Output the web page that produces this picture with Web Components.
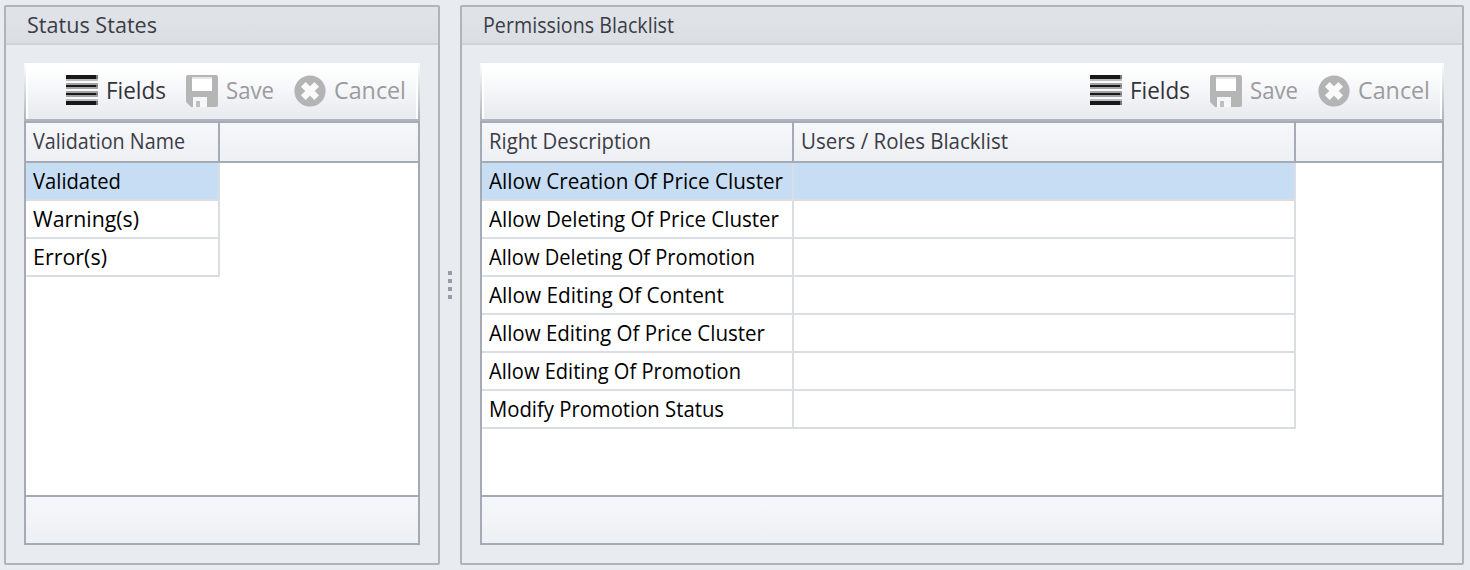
<!DOCTYPE html>
<html lang="en">
<head>
<meta charset="utf-8">
<title>Status permissions</title>
<style>
html,body{margin:0;height:100%;overflow:hidden}
body{background:#e8ebf0;font-family:"Open Sans","Noto Sans",sans-serif;color:#3c3c44}
</style>
</head>
<body>
<split-view>
  <group-panel slot="start" heading="Status States" heading-width="130">
    <tool-bar></tool-bar>
    <data-grid columns="192">
      <grid-header><grid-cell head text="Validation Name" fit="152"></grid-cell><grid-cell head></grid-cell></grid-header>
      <grid-row selected><grid-cell text="Validated" fit="88"></grid-cell></grid-row>
      <grid-row><grid-cell text="Warning(s)" fit="106"></grid-cell></grid-row>
      <grid-row><grid-cell text="Error(s)" fit="74"></grid-cell></grid-row>
    </data-grid>
  </group-panel>
  <group-panel slot="end" heading="Permissions Blacklist" heading-width="191">
    <tool-bar></tool-bar>
    <data-grid columns="310 500">
      <grid-header><grid-cell head text="Right Description" fit="162"></grid-cell><grid-cell head text="Users / Roles Blacklist" fit="207"></grid-cell><grid-cell head></grid-cell></grid-header>
      <grid-row selected><grid-cell text="Allow Creation Of Price Cluster" fit="294"></grid-cell><grid-cell></grid-cell></grid-row>
      <grid-row><grid-cell text="Allow Deleting Of Price Cluster" fit="290"></grid-cell><grid-cell></grid-cell></grid-row>
      <grid-row><grid-cell text="Allow Deleting Of Promotion" fit="266"></grid-cell><grid-cell></grid-cell></grid-row>
      <grid-row><grid-cell text="Allow Editing Of Content" fit="235"></grid-cell><grid-cell></grid-cell></grid-row>
      <grid-row><grid-cell text="Allow Editing Of Price Cluster" fit="276"></grid-cell><grid-cell></grid-cell></grid-row>
      <grid-row><grid-cell text="Allow Editing Of Promotion" fit="252"></grid-cell><grid-cell></grid-cell></grid-row>
      <grid-row><grid-cell text="Modify Promotion Status" fit="235"></grid-cell><grid-cell></grid-cell></grid-row>
    </data-grid>
  </group-panel>
</split-view>
<script>
class Base extends HTMLElement {
  constructor(){ super(); this.attachShadow({mode:'open'}); }
  connectedCallback(){ if(!this.shadowRoot.firstChild) this.shadowRoot.innerHTML = this.render(); this.ready(); }
  ready(){}
}

/* A line of text condensed to a given width. */
customElements.define('ui-label', class extends Base {
  render(){
    return `<style>:host{display:block;white-space:nowrap;width:var(--w)}
      span{display:inline-block;transform-origin:0 50%}</style><span>${this.getAttribute('text')}</span>`;
  }
  ready(){
    const want = +this.getAttribute('width'), s = this.shadowRoot.querySelector('span');
    this.style.setProperty('--w', want + 'px');
    const w = s.getBoundingClientRect().width;
    if (w) s.style.transform = `scaleX(${want / w})`;
  }
});

customElements.define('split-view', class extends Base {
  render(){
    return `<style>
      :host{display:grid;grid-template-columns:436px 20px 1004px;height:560px;padding:5px 6px 5px 4px}
      .bar{display:flex;flex-direction:column;align-items:center;justify-content:center;gap:4px}
      .bar i{width:4px;height:4px;background:#959ca8}
    </style><slot name="start"></slot><div class="bar"><i></i><i></i><i></i><i></i></div><slot name="end"></slot>`;
  }
});

customElements.define('group-panel', class extends Base {
  render(){
    return `<style>
      :host{display:flex;flex-direction:column;box-sizing:border-box;border:2px solid #b0b4ba;border-radius:2px;min-width:0}
      header{height:36px;border-bottom:2px solid #d0d4d8;background:linear-gradient(#e0e4e9,#dbdfe3);
        padding-left:21px;font-size:21.5px;line-height:36px;color:#3c3c46}
      .body{flex:1;display:flex;flex-direction:column;padding:18px}
    </style><header><ui-label text="${this.getAttribute('heading')}" width="${this.getAttribute('heading-width')}"></ui-label></header>
    <div class="body"><slot></slot></div>`;
  }
});

customElements.define('tool-button', class extends Base {
  render(){
    return `<style>:host{display:flex;align-items:center;gap:8px;font-size:23.5px;color:#333339}
      ui-label{line-height:30px;height:32px}
      :host([disabled]){color:#9b9b9f}</style><slot></slot>
      <ui-label text="${this.getAttribute('text')}" width="${this.getAttribute('fit')}"></ui-label>`;
  }
});

customElements.define('tool-bar', class extends Base {
  render(){
    return `<style>
      :host{display:flex;box-sizing:border-box;height:58px;align-items:center;justify-content:flex-end;padding:0 12px 0 0;
        border:solid;border-width:0 2px 2px;border-color:#b1b6bd;
        border-image:linear-gradient(#fff,#b1b6bd 96%) 1;
        background:linear-gradient(#fff 10%,#e8eaef);box-shadow:inset 2px 0 #fff,inset -2px 0 #fff}
      svg{display:block;width:32px;height:32px;flex:none}
      tool-button + tool-button{margin-left:20px}
    </style>
    <tool-button text="Fields" fit="60"><svg viewBox="0 0 32 32" shape-rendering="crispEdges">
      <path fill="#fafafb" d="M0 0h32v30H0z"/>
      <path fill="#bcbcbe" d="M0 4h32v2H0zM0 24h32v2H0z"/><path fill="#a2a2a4" d="M0 8h32v2H0zM0 12h32v2H0zM0 16h32v2H0zM0 20h32v2H0z"/>
      <path fill="#18181a" d="M0 0h32v4H0zM0 10h32v2H0zM0 18h32v2H0zM0 26h32v4H0z"/>
      <path fill="#777" d="M30 0h2v4h-2zM30 10h2v2h-2zM30 18h2v2h-2zM30 26h2v4h-2z"/></svg></tool-button>
    <tool-button disabled text="Save" fit="48"><svg viewBox="0 0 32 32">
      <path fill="#b5b5b5" d="M2 0h28q2 0 2 2v28q0 2-2 2H5l-5-5V2q0-2 2-2z"/>
      <path fill="#e6e6e6" d="M6 2h20v2H6z"/><path fill="#fff" d="M6 4h20v12H6z"/>
      <path fill="#f7f7f9" d="M7 22h14v10H7z"/>
      <path fill="#c0c0c0" d="M10 26h4v6h-4z"/></svg></tool-button>
    <tool-button disabled text="Cancel" fit="72"><svg viewBox="0 0 32 32">
      <circle cx="16" cy="16" r="15.6" fill="#b4b4b4"/>
      <path d="M9.3 9.3 22.7 22.7M22.7 9.3 9.3 22.7" stroke="#fafafb" stroke-width="6.6"/></svg></tool-button>`;
  }
});

customElements.define('data-grid', class extends Base {
  render(){
    const cols = this.getAttribute('columns').split(' ').map(n => (+n + 2) + 'px').join(' ');
    return `<style>
      :host{display:flex;flex-direction:column;flex:1;box-sizing:border-box;border:2px solid #a4abb6;background:#fff;--cols:${cols}}
      .rows{flex:1}
      footer{height:46px;border-top:2px solid #a4abb6;background:linear-gradient(#f6f7fa,#edf0f4)}
    </style><div class="rows"><slot></slot></div><footer></footer>`;
  }
});

customElements.define('grid-header', class extends Base {
  render(){
    return `<style>:host{display:grid;grid-template-columns:var(--cols) 1fr;height:38px;border-bottom:2px solid #a4abb6;
      background:linear-gradient(#f6f7fa,#edf0f4)}</style><slot></slot>`;
  }
});

customElements.define('grid-row', class extends Base {
  render(){
    return `<style>:host{display:grid;grid-template-columns:var(--cols);height:38px}
      :host([selected]){--fill:#c7ddf4}</style><slot></slot>`;
  }
});

customElements.define('grid-cell', class extends Base {
  render(){
    const t = this.getAttribute('text');
    return `<style>
      :host{box-sizing:border-box;padding-left:7px;border-right:2px solid #dadde1;border-bottom:2px solid #dadde1;
        background:var(--fill,transparent);background-clip:padding-box;font-size:21.5px;line-height:36px;color:#000;display:block;min-width:0}
      :host([head]){border-bottom:0;border-right-color:#a4abb6;color:#3c3c46;line-height:35px}
      :host([head]:last-child){border-right:0}
    </style>${t ? `<ui-label text="${t}" width="${this.getAttribute('fit')}"></ui-label>` : ''}`;
  }
});
</script>
</body>
</html>
